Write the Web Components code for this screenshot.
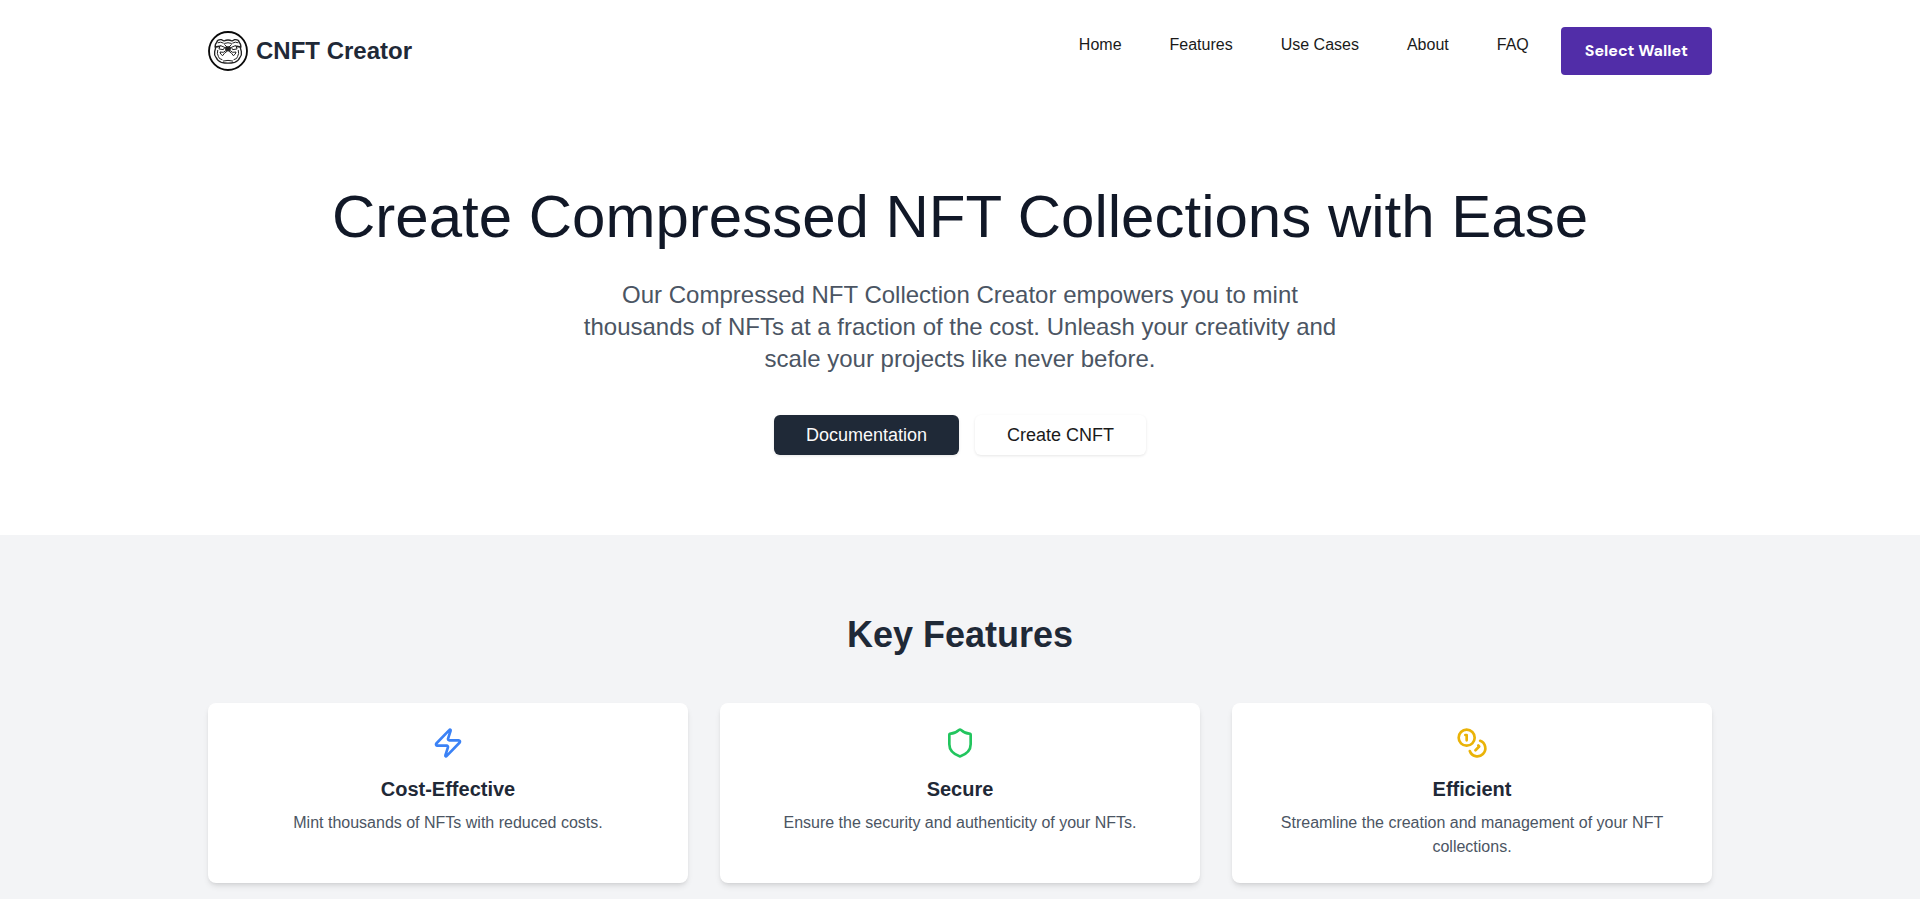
<!DOCTYPE html>
<html lang="en">
<head>
<meta charset="utf-8">
<meta name="viewport" content="width=device-width, initial-scale=1">
<title>CNFT Creator</title>
<style>
  body {
    margin: 0;
    background: #fff;
    color: #1a1a1a;
    font: 16px/24px "Liberation Sans", Arial, sans-serif;
  }
</style>
</head>
<body>
<cnft-page></cnft-page>

<script>
const define = (name, html) => {
  const template = document.createElement('template');
  template.innerHTML = `<style>*, *::before, *::after { box-sizing: border-box; } :host { display: block; }</style>${html}`;
  customElements.define(name, class extends HTMLElement {
    constructor() {
      super();
      this.attachShadow({ mode: 'open' }).append(template.content.cloneNode(true));
    }
  });
};

define('cnft-container', `
  <style>
    :host { max-width: 1536px; margin: 0 auto; padding: 0 16px; box-sizing: border-box; }
  </style>
  <slot></slot>`);

define('cnft-logo', `
  <style>
    a { display: flex; align-items: center; gap: 8px; color: #1f2937; text-decoration: none; font-size: 24px; line-height: 32px; font-weight: 700; }
    svg { width: 40px; height: 40px; display: block; }
  </style>
  <a href="#">
    <svg viewBox="0 0 120 120" fill="none" stroke="#222" stroke-linecap="round" stroke-linejoin="round" aria-hidden="true">
      <circle cx="60" cy="60" r="57" stroke="#0a0a0a" stroke-width="5.5"/>
      <g stroke-width="3">
        <path d="M26 34 Q28 25 40 26 L48 30 Q60 24 72 30 L80 26 Q92 25 94 34 Q101 42 97 50 L100 62 Q102 72 96 79 Q92 90 80 94 Q60 99 40 94 Q28 90 24 79 Q18 72 20 62 L23 50 Q19 42 26 34 Z" stroke-width="4"/>
        <path d="M30 35 Q38 31 46 36 M90 35 Q82 31 74 36 M50 37 Q60 33 70 37"/>
        <path d="M22 48 L34 46 M98 48 L86 46" stroke-width="5"/>
        <path d="M38 44 L50 49 L46 56 L34 54 Z M82 44 L70 49 L74 56 L86 54 Z"/>
        <path d="M52 49 L60 47 L68 49 L66 57 L60 60 L54 57 Z" fill="#222"/>
        <path d="M50 41 L57 48 M70 41 L63 48"/>
        <path d="M56 57 L46 64 L36 63 L38 69 L44 74 L49 67 L58 60 M64 57 L74 64 L84 63 L82 69 L76 74 L71 67 L62 60"/>
        <path d="M29 58 Q26 68 31 76 Q32 84 42 86 M91 58 Q94 68 89 76 Q88 84 78 86"/>
        <path d="M46 90 Q60 86 74 90"/>
      </g>
    </svg>
    <slot></slot>
  </a>`);

define('cnft-nav-link', `
  <style>
    a { display: block; padding: 0 16px; color: #1a1a1a; text-decoration: none; line-height: 36px; }
  </style>
  <a href="#"><slot></slot></a>`);

define('cnft-wallet-button', `
  <style>
    button { display: block; height: 48px; padding: 0 24px; border: 0; border-radius: 4px; background: #512da8; color: #fff; font: 700 16px/48px "DM Sans", Inter, sans-serif; cursor: pointer; white-space: nowrap; }
  </style>
  <button type="button"><slot></slot></button>`);

define('cnft-header', `
  <style>
    .bar { display: flex; justify-content: space-between; align-items: center; padding: 27px 0; }
    .right { display: flex; align-items: flex-start; gap: 16px; }
    nav { display: flex; gap: 16px; }
  </style>
  <header>
    <cnft-container>
      <div class="bar">
        <cnft-logo>CNFT Creator</cnft-logo>
        <div class="right">
          <nav aria-label="Main">
            <cnft-nav-link>Home</cnft-nav-link>
            <cnft-nav-link>Features</cnft-nav-link>
            <cnft-nav-link>Use Cases</cnft-nav-link>
            <cnft-nav-link>About</cnft-nav-link>
            <cnft-nav-link>FAQ</cnft-nav-link>
          </nav>
          <cnft-wallet-button>Select Wallet</cnft-wallet-button>
        </div>
      </div>
    </cnft-container>
  </header>`);

define('cnft-button', `
  <style>
    button { display: block; height: 40px; padding: 0 32px; border: 0; border-radius: 6px; background: #fff; color: #1a1a1a; font: 18px/40px "Liberation Sans", Arial, sans-serif; box-shadow: 0 1px 3px rgba(0, 0, 0, .1); cursor: pointer; }
    :host([primary]) button { background: #1f2937; color: #fafafa; }
  </style>
  <button type="button"><slot></slot></button>`);

define('cnft-hero', `
  <style>
    section { padding: 85px 0 80px; text-align: center; }
    h1 { margin: 0 0 32px; font-size: 60px; line-height: 60px; font-weight: 400; color: #111827; }
    p { max-width: 768px; margin: 0 auto 40px; font-size: 24px; line-height: 32px; color: #4b5563; }
    .actions { display: flex; justify-content: center; gap: 16px; }
  </style>
  <section>
    <cnft-container>
      <h1>Create Compressed NFT Collections with Ease</h1>
      <p>Our Compressed NFT Collection Creator empowers you to mint thousands of NFTs at a fraction of the cost. Unleash your creativity and scale your projects like never before.</p>
      <div class="actions">
        <cnft-button primary>Documentation</cnft-button>
        <cnft-button>Create CNFT</cnft-button>
      </div>
    </cnft-container>
  </section>`);

define('cnft-feature-card', `
  <style>
    article { height: 100%; padding: 24px; border-radius: 8px; background: #fff; text-align: center; box-shadow: 0 4px 6px -1px rgba(0, 0, 0, .1), 0 2px 4px -2px rgba(0, 0, 0, .1); }
    ::slotted(svg) { display: block; width: 32px; height: 32px; margin: 0 auto 16px; fill: none; stroke: currentColor; stroke-width: 2; stroke-linecap: round; stroke-linejoin: round; }
    h3 { margin: 0 0 8px; font-size: 20px; line-height: 28px; font-weight: 700; color: #1f2937; }
    p { margin: 0; color: #4b5563; }
  </style>
  <article>
    <slot name="icon"></slot>
    <h3><slot name="title"></slot></h3>
    <p><slot></slot></p>
  </article>`);

define('cnft-features', `
  <style>
    section { padding: 80px 0; background: #f3f4f6; }
    h2 { margin: 0 0 48px; font-size: 36px; line-height: 40px; font-weight: 700; color: #1f2937; text-align: center; }
    .grid { display: grid; grid-template-columns: repeat(3, 1fr); gap: 32px; }
    @media (max-width: 900px) { .grid { grid-template-columns: 1fr; } }
    .blue { color: #3b82f6; }
    .green { color: #22c55e; }
    .yellow { color: #eab308; }
  </style>
  <section>
    <cnft-container>
      <h2>Key Features</h2>
      <div class="grid">
        <cnft-feature-card>
          <svg slot="icon" class="blue" viewBox="0 0 24 24" aria-hidden="true"><path d="M4 14a1 1 0 0 1-.78-1.63l9.9-10.2a.5.5 0 0 1 .86.46l-1.92 6.02A1 1 0 0 0 13 10h7a1 1 0 0 1 .78 1.63l-9.9 10.2a.5.5 0 0 1-.86-.46l1.92-6.02A1 1 0 0 0 11 14z"/></svg>
          <span slot="title">Cost-Effective</span>
          Mint thousands of NFTs with reduced costs.
        </cnft-feature-card>
        <cnft-feature-card>
          <svg slot="icon" class="green" viewBox="0 0 24 24" aria-hidden="true"><path d="M20 13c0 5-3.5 7.5-7.66 8.95a1 1 0 0 1-.67-.01C7.5 20.5 4 18 4 13V6a1 1 0 0 1 1-1c2 0 4.5-1.2 6.24-2.72a1.17 1.17 0 0 1 1.52 0C14.51 3.81 17 5 19 5a1 1 0 0 1 1 1z"/></svg>
          <span slot="title">Secure</span>
          Ensure the security and authenticity of your NFTs.
        </cnft-feature-card>
        <cnft-feature-card>
          <svg slot="icon" class="yellow" viewBox="0 0 24 24" aria-hidden="true"><circle cx="8" cy="8" r="6"/><path d="M18.09 10.37A6 6 0 1 1 10.34 18M7 6h1v4M16.71 13.88l.7.71-2.82 2.82"/></svg>
          <span slot="title">Efficient</span>
          Streamline the creation and management of your NFT collections.
        </cnft-feature-card>
      </div>
    </cnft-container>
  </section>`);

define('cnft-page', `
  <cnft-header></cnft-header>
  <main>
    <cnft-hero></cnft-hero>
    <cnft-features></cnft-features>
  </main>`);
</script>
</body>
</html>
